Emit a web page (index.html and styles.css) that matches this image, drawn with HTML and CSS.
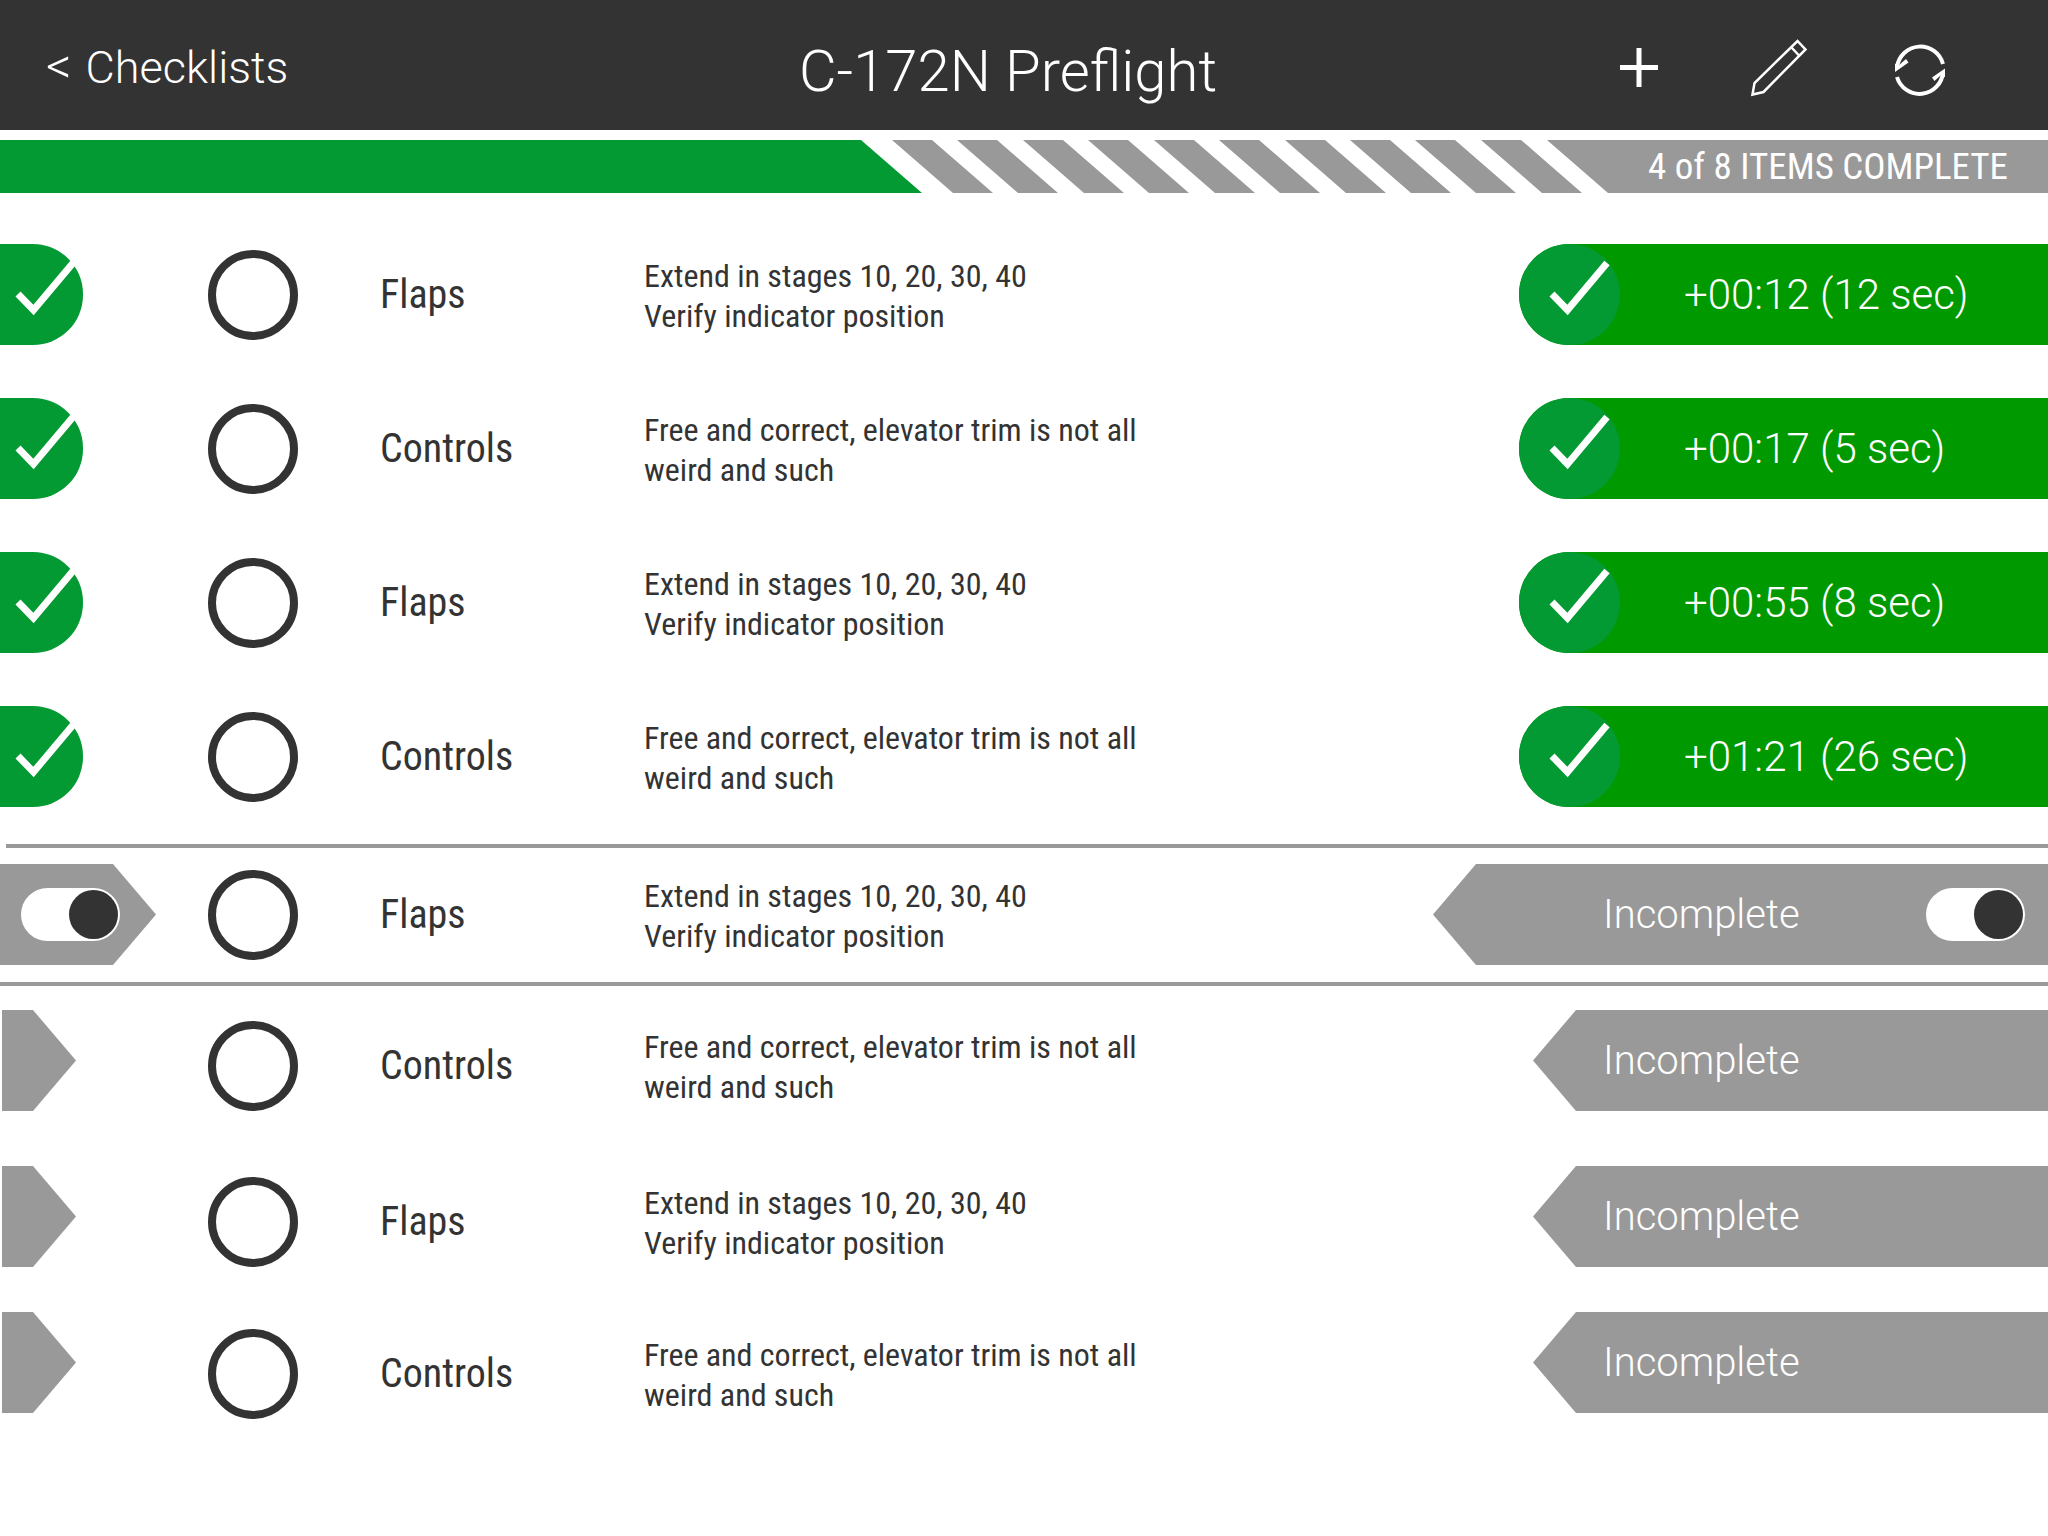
FILE: index.html
```html
<!DOCTYPE html>
<html lang="en">
<head>
<meta charset="utf-8">
<meta name="viewport" content="width=device-width, initial-scale=1">
<title>C-172N Preflight</title>
<link rel="stylesheet" href="styles.css">
</head>
<body>
<svg class="defs" aria-hidden="true">
  <symbol id="check" viewBox="0 0 100 100">
    <path d="M33 50 L48.500 66 L88 19" fill="none" stroke="#fff" stroke-width="7"/>
  </symbol>
</svg>

<header class="topbar">
  <a class="back" href="#"><span class="back-mark">&lt;</span> Checklists</a>
  <h1 class="heading">C-172N Preflight</h1>
  <div class="actions">
    <button class="action" type="button" aria-label="Add item">
      <svg width="60" height="60" viewBox="0 0 60 60"><path d="M31 10V49M12 29.500H50" stroke="#fff" stroke-width="5" fill="none"/></svg>
    </button>
    <button class="action" type="button" aria-label="Edit">
      <svg width="60" height="60" viewBox="0 0 60 60"><path d="M3.500 56.500L5.500 45L48.500 3L56.500 11.500L14.500 54ZM42.500 9.500L50.500 18" stroke="#fff" stroke-width="2.500" fill="none"/></svg>
    </button>
    <button class="action" type="button" aria-label="Reset">
      <svg width="60" height="60" viewBox="0 0 60 60">
        <path d="M53 26A23.500 23.500 0 0 0 7 29M7 39A23.500 23.500 0 0 0 53 34" stroke="#fff" stroke-width="4" fill="none"/>
        <path d="M5 34V26L9 25V27L16 21L18.500 24.500ZM55 30.500V39L51 39V37L44.500 43L42 39.500Z" fill="#fff"/>
      </svg>
    </button>
  </div>
</header>

<div class="progress">
  <div class="progress-done"></div>
  <svg class="progress-stripes" width="715" height="53" viewBox="0 0 715 53" aria-hidden="true">
    <path fill="#999" d="M0 0h40l61 53h-40zM65 0h40l61 53h-40zM131 0h40l61 53h-40zM196 0h40l61 53h-40zM262 0h40l61 53h-40zM327 0h40l61 53h-40zM393 0h40l61 53h-40zM458 0h40l61 53h-40zM523 0h40l61 53h-40zM589 0h40l61 53h-40z"/>
  </svg>
  <div class="progress-label">4 of 8 ITEMS COMPLETE</div>
</div>

<main>
  <ul class="rows done">
    <li class="row">
      <div class="marker marker-done"><svg class="check" width="100" height="100"><use href="#check"/></svg></div>
      <input class="dot" type="checkbox" id="i1">
      <label class="name" for="i1">Flaps</label>
      <p class="note">Extend in stages 10, 20, 30, 40<br>Verify indicator position</p>
      <div class="status status-done"><span class="badge"><svg width="100" height="100"><use href="#check"/></svg></span>+00:12 (12 sec)</div>
    </li>
    <li class="row">
      <div class="marker marker-done"><svg class="check" width="100" height="100"><use href="#check"/></svg></div>
      <input class="dot" type="checkbox" id="i2">
      <label class="name" for="i2">Controls</label>
      <p class="note">Free and correct, elevator trim is not all weird and such</p>
      <div class="status status-done"><span class="badge"><svg width="100" height="100"><use href="#check"/></svg></span>+00:17 (5 sec)</div>
    </li>
    <li class="row">
      <div class="marker marker-done"><svg class="check" width="100" height="100"><use href="#check"/></svg></div>
      <input class="dot" type="checkbox" id="i3">
      <label class="name" for="i3">Flaps</label>
      <p class="note">Extend in stages 10, 20, 30, 40<br>Verify indicator position</p>
      <div class="status status-done"><span class="badge"><svg width="100" height="100"><use href="#check"/></svg></span>+00:55 (8 sec)</div>
    </li>
    <li class="row">
      <div class="marker marker-done"><svg class="check" width="100" height="100"><use href="#check"/></svg></div>
      <input class="dot" type="checkbox" id="i4">
      <label class="name" for="i4">Controls</label>
      <p class="note">Free and correct, elevator trim is not all weird and such</p>
      <div class="status status-done"><span class="badge"><svg width="100" height="100"><use href="#check"/></svg></span>+01:21 (26 sec)</div>
    </li>
  </ul>

  <hr class="rule rule-inset">
  <ul class="rows current">
    <li class="row">
      <div class="marker marker-current"><input class="switch" type="checkbox" role="switch" aria-label="Flaps, left switch" checked></div>
      <input class="dot" type="checkbox" id="i5">
      <label class="name" for="i5">Flaps</label>
      <p class="note">Extend in stages 10, 20, 30, 40<br>Verify indicator position</p>
      <div class="status status-open status-current">Incomplete<input class="switch" type="checkbox" role="switch" aria-label="Flaps, right switch" checked></div>
    </li>
  </ul>
  <hr class="rule">

  <ul class="rows pending">
    <li class="row">
      <div class="marker marker-open"></div>
      <input class="dot" type="checkbox" id="i6">
      <label class="name" for="i6">Controls</label>
      <p class="note">Free and correct, elevator trim is not all weird and such</p>
      <div class="status status-open">Incomplete</div>
    </li>
    <li class="row">
      <div class="marker marker-open"></div>
      <input class="dot" type="checkbox" id="i7">
      <label class="name" for="i7">Flaps</label>
      <p class="note">Extend in stages 10, 20, 30, 40<br>Verify indicator position</p>
      <div class="status status-open">Incomplete</div>
    </li>
    <li class="row">
      <div class="marker marker-open"></div>
      <input class="dot" type="checkbox" id="i8">
      <label class="name" for="i8">Controls</label>
      <p class="note">Free and correct, elevator trim is not all weird and such</p>
      <div class="status status-open">Incomplete</div>
    </li>
  </ul>
</main>
</body>
</html>
```
FILE: styles.css
```css
:root {
  --ink: #333;
  --gray: #999;
  --green: #039933;
  --bright: #090;
  --light: Roboto, "Liberation Sans", sans-serif;
  --narrow: "Roboto Condensed", "Liberation Sans", sans-serif;
}

* { box-sizing: border-box; }

body {
  margin: 0;
  background: #fff;
  color: var(--ink);
  font-family: var(--narrow);
}

.defs { display: none; }
svg { display: block; }

/* Top bar */
.topbar {
  display: grid;
  grid-template-columns: 1fr auto 1fr;
  align-items: center;
  height: 130px;
  padding: 0 98px 0 46px;
  background: var(--ink);
  color: #fff;
  font-family: var(--light);
  font-weight: 300;
}
.back {
  display: flex;
  align-items: baseline;
  gap: 14px;
  padding-top: 4px;
  color: inherit;
  font-size: 45px;
  line-height: 60px;
  text-decoration: none;
}
.back-mark { font-size: 50px; }
.heading { margin: 0; padding: 12px 0 0 20px; font-size: 58px; line-height: 70px; font-weight: 300; }
.actions { display: flex; justify-content: flex-end; gap: 81px; padding-top: 6px; }
.action { padding: 0; border: 0; background: none; cursor: pointer; }

/* Progress bar */
.progress { display: flex; height: 53px; margin-top: 10px; }
.progress-done {
  flex: 1;
  background: var(--green);
  clip-path: polygon(0 0, calc(100% - 61px) 0, 100% 100%, 0 100%);
}
.progress-stripes { flex: none; margin: 0 -60px 0 -30px; }
.progress-label {
  flex: none;
  width: 501px;
  padding-right: 40px;
  background: var(--gray);
  clip-path: polygon(0 0, 100% 0, 100% 100%, 61px 100%);
  color: #fff;
  font-size: 37px;
  line-height: 53px;
  text-align: right;
}

/* Checklist rows */
.rows { display: flex; flex-direction: column; margin: 0; padding: 0; list-style: none; }
.done { gap: 53px; padding: 51px 0 37px; }
.current { padding: 16px 0 17px; }
.pending { gap: 55px; padding: 24px 0 60px; }
.pending .row { align-items: end; }
.pending .row:last-child { min-height: 107px; margin-top: -10px; }
.pending .marker, .pending .status { align-self: start; }

.row {
  display: grid;
  grid-template-columns: 208px 172px 264px 1fr auto;
  align-items: center;
}

.rule { height: 4px; margin: 0; border: 0; background: var(--gray); }
.rule-inset { margin-left: 6px; }

.marker { height: 101px; }
.marker-done { width: 83px; border-radius: 0 50px 50px 0; background: var(--green); }
.check { margin-left: -15px; }
.marker-current {
  display: flex;
  align-items: center;
  width: 156px;
  padding-left: 21px;
  background: var(--gray);
  clip-path: polygon(0 0, 113px 0, 100% 50%, 113px 100%, 0 100%);
}
.marker-open {
  width: 74px;
  margin-left: 2px;
  background: var(--gray);
  clip-path: polygon(0 0, 31px 0, 100% 50%, 31px 100%, 0 100%);
}

.dot {
  appearance: none;
  width: 90px;
  height: 90px;
  margin: 0;
  border: 8px solid var(--ink);
  border-radius: 50%;
  background: #fff;
}
.name { font-size: 40px; line-height: 90px; }
.note { max-width: 510px; margin: 0; padding: 7px 0 4px; font-size: 32px; line-height: 40px; }

.status {
  display: flex;
  align-items: center;
  height: 101px;
  color: #fff;
  font-family: var(--light);
  font-weight: 300;
}
.status-done {
  gap: 64px;
  width: 529px;
  border-radius: 50px 0 0 50px;
  background: var(--bright);
  font-size: 42px;
}
.badge { flex: none; width: 101px; height: 101px; border-radius: 50%; background: var(--green); }
.status-open {
  width: 515px;
  padding-left: 70px;
  background: var(--gray);
  clip-path: polygon(43px 0, 100% 0, 100% 100%, 43px 100%, 0 50%);
  font-size: 40px;
}
.status-current { justify-content: space-between; width: 615px; padding: 0 23px 0 170px; }

.switch {
  appearance: none;
  display: flex;
  justify-content: flex-end;
  width: 99px;
  height: 53px;
  margin: 0;
  padding: 2px;
  border-radius: 27px;
  background: #fff;
}
.switch::before { content: ""; width: 49px; height: 49px; border-radius: 50%; background: var(--ink); }
.switch:not(:checked) { justify-content: flex-start; }
```
